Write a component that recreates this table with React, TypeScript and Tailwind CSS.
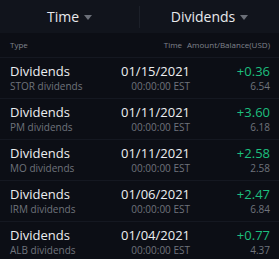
const rows = [
  { sym: 'STOR', date: '01/15/2021', amount: '+0.36', balance: '6.54' },
  { sym: 'PM', date: '01/11/2021', amount: '+3.60', balance: '6.18' },
  { sym: 'MO', date: '01/11/2021', amount: '+2.58', balance: '2.58' },
  { sym: 'IRM', date: '01/06/2021', amount: '+2.47', balance: '6.84' },
  { sym: 'ALB', date: '01/04/2021', amount: '+0.77', balance: '4.37' },
]

function Caret() {
  return (
    <svg width="8" height="5" viewBox="0 0 8 5" className="ml-[5px] mt-[1px]">
      <path d="M0 0 H8 L4 5 Z" fill="#6b6f78" />
    </svg>
  )
}

export default function App() {
  return (
    <div
      className="w-[279px] h-[259px] overflow-hidden bg-[#0c0e15] text-white"
      style={{ fontFamily: '"Open Sans", "Noto Sans", sans-serif' }}
    >
      {/* Filter tabs */}
      <div className="h-[33px] flex items-center bg-[#11141c]">
        <div className="flex-1 flex items-center justify-center">
          <span className="text-[14px] text-[#e8e9ec]">Time</span>
          <Caret />
        </div>
        <div className="w-px h-[22px] bg-[#1c2029]" />
        <div className="flex-1 flex items-center justify-center">
          <span className="text-[14px] text-[#e8e9ec]">Dividends</span>
          <Caret />
        </div>
      </div>

      {/* Column labels */}
      <div className="h-[25px] flex items-center pl-[10px] pr-[9px] text-[8px] text-[#80848d] border-b border-[#151821]">
        <span className="flex-1">Type</span>
        <span>Time</span>
        <span className="ml-[5px]">Amount/Balance(USD)</span>
      </div>

      {rows.map((r) => (
        <div
          key={r.sym}
          className="h-[41px] flex items-center pl-[10px] pr-[9px] border-b border-[#151821]"
        >
          <div className="flex-1 flex flex-col">
            <span className="text-[13px] leading-[17px] text-[#eceef1]">Dividends</span>
            <span className="text-[10px] leading-[13px] text-[#6f737c]">{r.sym} dividends</span>
          </div>
          <div className="flex flex-col items-end">
            <span className="text-[13px] leading-[17px] text-[#eceef1]">{r.date}</span>
            <span className="text-[10px] leading-[13px] text-[#6f737c]">00:00:00 EST</span>
          </div>
          <div className="w-[80px] flex flex-col items-end">
            <span className="text-[13px] leading-[17px] text-[#1dbf7f]">{r.amount}</span>
            <span className="text-[10px] leading-[13px] text-[#6f737c]">{r.balance}</span>
          </div>
        </div>
      ))}
    </div>
  )
}
